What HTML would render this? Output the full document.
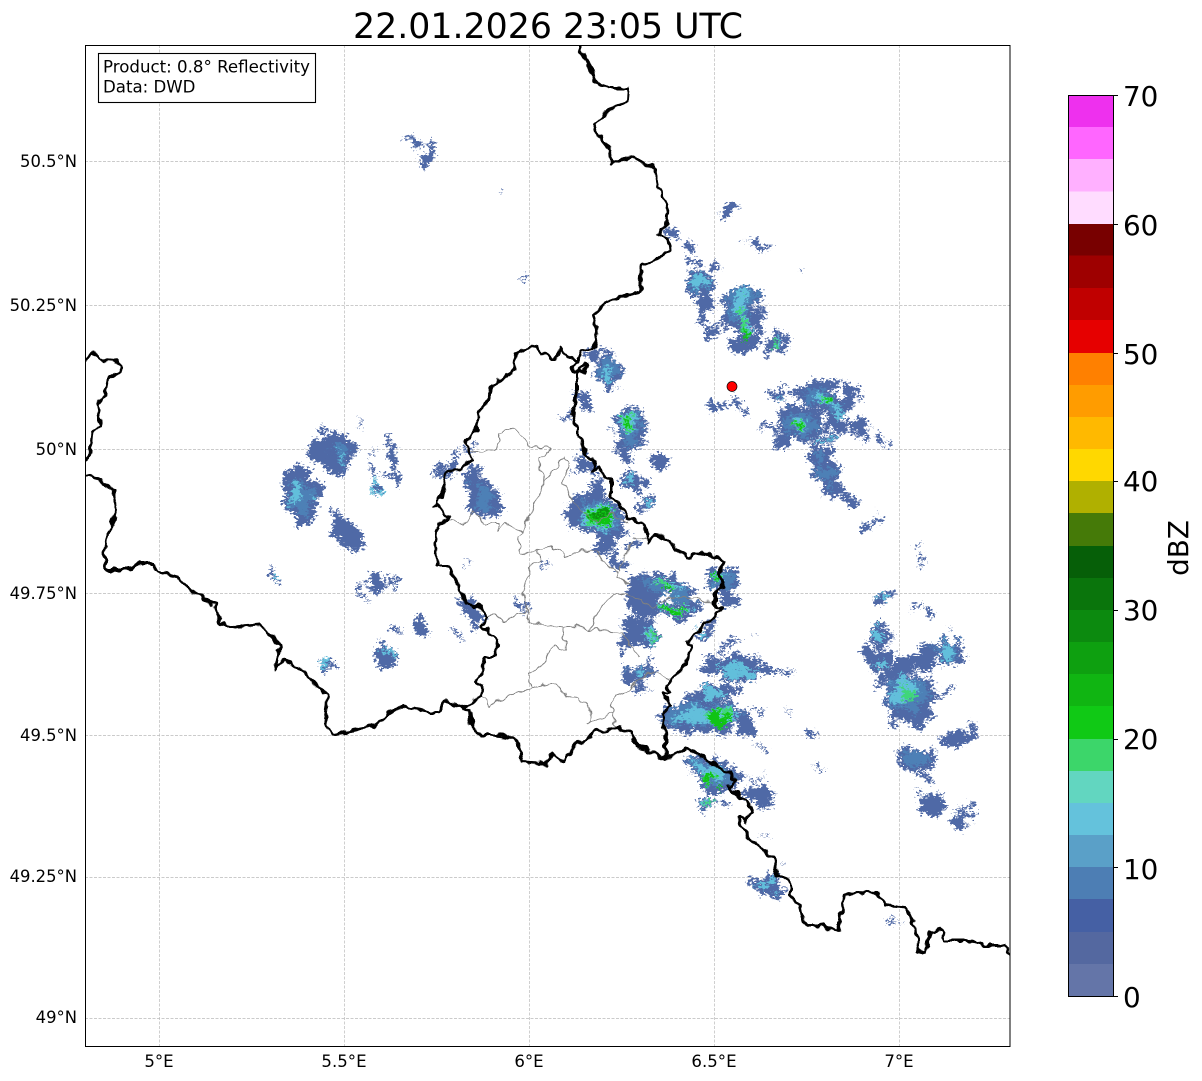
<!DOCTYPE html>
<html><head><meta charset="utf-8"><style>
html,body{margin:0;padding:0;background:#fff}
svg{display:block}
text{font-family:"DejaVu Sans","Liberation Sans",sans-serif;fill:#000}
</style></head><body>
<svg width="1202" height="1081" viewBox="0 0 1202 1081" xmlns="http://www.w3.org/2000/svg">
<defs>
<filter id="r" filterUnits="userSpaceOnUse" x="85" y="45" width="925" height="1002" color-interpolation-filters="sRGB">
<feTurbulence type="fractalNoise" baseFrequency="0.07" numOctaves="2" seed="4" result="a"/>
<feTurbulence type="fractalNoise" baseFrequency="0.3 0.45" numOctaves="2" seed="9" result="b"/>
<feDisplacementMap in="SourceGraphic" in2="a" scale="26" xChannelSelector="R" yChannelSelector="G" result="d"/>
<feDisplacementMap in="d" in2="b" scale="14" xChannelSelector="R" yChannelSelector="G"/>
</filter>
<filter id="w" filterUnits="userSpaceOnUse" x="85" y="45" width="925" height="1002" color-interpolation-filters="sRGB">
<feTurbulence type="fractalNoise" baseFrequency="0.14" numOctaves="1" seed="7" result="a"/>
<feDisplacementMap in="SourceGraphic" in2="a" scale="9" xChannelSelector="R" yChannelSelector="G"/>
</filter>
<clipPath id="ax"><rect x="85.5" y="45.5" width="924.5" height="1001"/></clipPath>
</defs>
<rect width="1202" height="1081" fill="#fff"/>
<text x="353" y="38" font-size="34.700" textLength="390" lengthAdjust="spacingAndGlyphs">22.01.2026 23:05 UTC</text>

<g stroke="#bbb" stroke-width="0.7" stroke-dasharray="3 1.5" fill="none">
<path d="M159.500 45V1047M344.500 45V1047M529.500 45V1047M714.500 45V1047M899.500 45V1047"/>
<path d="M85 161.500H1010M85 305.500H1010M85 449.500H1010M85 593.500H1010M85 735.500H1010M85 877.500H1010M85 1018.500H1010"/>
</g>

<g clip-path="url(#ax)">
<g filter="url(#r)">
<!-- base blue layer -->
<g fill="#4f69a6">
<ellipse cx="415" cy="143" rx="6" ry="2" transform="rotate(-40 415 143)"/>
<ellipse cx="430" cy="155" rx="14" ry="4" transform="rotate(-70 430 155)"/>
<circle cx="504" cy="193" r="2"/>
<ellipse cx="518" cy="277" rx="6" ry="2" transform="rotate(-50 518 277)"/>
<ellipse cx="728" cy="211" rx="9" ry="4" transform="rotate(-40 728 211)"/>
<ellipse cx="758" cy="246" rx="16" ry="4" transform="rotate(25 758 246)"/>
<ellipse cx="673" cy="233" rx="5" ry="6"/>
<ellipse cx="688" cy="248" rx="7" ry="5"/>
<circle cx="693" cy="262" r="4"/>
<ellipse cx="701" cy="282" rx="14" ry="12"/>
<ellipse cx="705" cy="303" rx="8" ry="11"/>
<ellipse cx="703" cy="318" rx="8" ry="8"/>
<ellipse cx="741" cy="310" rx="20" ry="24"/>
<ellipse cx="743" cy="343" rx="13" ry="11"/>
<circle cx="760" cy="328" r="5"/>
<ellipse cx="758" cy="340" rx="5" ry="7"/>
<ellipse cx="777" cy="344" rx="9" ry="10"/>
<circle cx="715" cy="331" r="4"/>
<circle cx="715" cy="268" r="3"/>
<circle cx="801" cy="269" r="1.500"/>
<ellipse cx="718" cy="406" rx="7" ry="5"/>
<ellipse cx="742" cy="408" rx="3" ry="5" transform="rotate(-30 742 408)"/>
<ellipse cx="800" cy="424" rx="23" ry="17"/>
<ellipse cx="782" cy="440" rx="6" ry="11"/>
<ellipse cx="770" cy="426" rx="6" ry="3" transform="rotate(-25 770 426)"/>
<ellipse cx="778" cy="396" rx="7" ry="4" transform="rotate(25 778 396)"/>
<ellipse cx="783" cy="388" rx="3" ry="8" transform="rotate(20 783 388)"/>
<ellipse cx="817" cy="387" rx="24" ry="7" transform="rotate(-20 817 387)"/>
<ellipse cx="823" cy="400" rx="27" ry="13" transform="rotate(25 823 400)"/>
<ellipse cx="837" cy="415" rx="10" ry="10"/>
<ellipse cx="850" cy="393" rx="6" ry="15"/>
<ellipse cx="820" cy="441" rx="13" ry="6" transform="rotate(-25 820 441)"/>
<ellipse cx="837" cy="427" rx="12" ry="6"/>
<ellipse cx="857" cy="425" rx="7" ry="6"/>
<ellipse cx="865" cy="428" rx="6" ry="9"/>
<ellipse cx="879" cy="438" rx="2" ry="8" transform="rotate(-15 879 438)"/>
<ellipse cx="889" cy="446" rx="2" ry="5"/>
<ellipse cx="825" cy="470" rx="12" ry="27" transform="rotate(-25 825 470)"/>
<ellipse cx="848" cy="497" rx="13" ry="6" transform="rotate(35 848 497)"/>
<ellipse cx="873" cy="522" rx="11" ry="3" transform="rotate(-35 873 522)"/>
<ellipse cx="916" cy="549" rx="4" ry="2" transform="rotate(-40 916 549)"/>
<ellipse cx="926" cy="563" rx="7" ry="2.500" transform="rotate(-50 926 563)"/>
<ellipse cx="885" cy="598" rx="10" ry="5" transform="rotate(-50 885 598)"/>
<ellipse cx="917" cy="608" rx="6" ry="3" transform="rotate(-30 917 608)"/>
<ellipse cx="933" cy="611" rx="6" ry="3" transform="rotate(-35 933 611)"/>
<ellipse cx="880" cy="637" rx="12" ry="9"/>
<ellipse cx="878" cy="660" rx="14" ry="12"/>
<ellipse cx="903" cy="666" rx="30" ry="8" transform="rotate(-30 903 666)"/>
<ellipse cx="925" cy="658" rx="24" ry="7" transform="rotate(-25 925 658)"/>
<ellipse cx="947" cy="652" rx="20" ry="11" transform="rotate(10 947 652)"/>
<ellipse cx="927" cy="667" rx="14" ry="4" transform="rotate(-25 927 667)"/>
<ellipse cx="950" cy="627" rx="4" ry="3"/>
<ellipse cx="910" cy="700" rx="26" ry="27" transform="rotate(-20 910 700)"/>
<ellipse cx="943" cy="693" rx="14" ry="3" transform="rotate(-30 943 693)"/>
<ellipse cx="960" cy="737" rx="22" ry="7" transform="rotate(-20 960 737)"/>
<ellipse cx="917" cy="760" rx="21" ry="12" transform="rotate(5 917 760)"/>
<ellipse cx="925" cy="780" rx="11" ry="3" transform="rotate(-15 925 780)"/>
<ellipse cx="932" cy="802" rx="15" ry="11" transform="rotate(-35 932 802)"/>
<ellipse cx="962" cy="809" rx="11" ry="3" transform="rotate(-25 962 809)"/>
<ellipse cx="962" cy="822" rx="16" ry="6" transform="rotate(-25 962 822)"/>
<ellipse cx="592" cy="354" rx="7" ry="8"/>
<ellipse cx="608" cy="371" rx="13" ry="15" transform="rotate(-20 608 371)"/>
<ellipse cx="584" cy="398" rx="7" ry="9"/>
<ellipse cx="568" cy="414" rx="3" ry="6"/>
<ellipse cx="631" cy="428" rx="17" ry="22"/>
<ellipse cx="625" cy="455" rx="7" ry="6"/>
<ellipse cx="657" cy="458" rx="6" ry="9"/>
<ellipse cx="634" cy="483" rx="8" ry="14" transform="rotate(-25 634 483)"/>
<ellipse cx="648" cy="505" rx="8" ry="8"/>
<ellipse cx="597" cy="516" rx="30" ry="20" transform="rotate(25 597 516)"/>
<ellipse cx="574" cy="518" rx="10" ry="10"/>
<ellipse cx="607" cy="543" rx="10" ry="10" transform="rotate(45 607 543)"/>
<ellipse cx="618" cy="562" rx="9" ry="4" transform="rotate(45 618 562)"/>
<ellipse cx="633" cy="547" rx="6" ry="4" transform="rotate(-45 633 547)"/>
<ellipse cx="597" cy="490" rx="8" ry="8"/>
<ellipse cx="585" cy="463" rx="15" ry="6" transform="rotate(45 585 463)"/>
<circle cx="573" cy="472" r="3"/>
<ellipse cx="482" cy="495" rx="16" ry="28" transform="rotate(-25 482 495)"/>
<ellipse cx="450" cy="463" rx="6" ry="17" transform="rotate(25 450 463)"/>
<circle cx="472" cy="448" r="5"/>
<circle cx="468" cy="563" r="2"/>
<ellipse cx="469" cy="610" rx="9" ry="19" transform="rotate(-30 469 610)"/>
<ellipse cx="523" cy="602" rx="3.500" ry="12" transform="rotate(-40 523 602)"/>
<ellipse cx="545" cy="563" rx="5" ry="2" transform="rotate(35 545 563)"/>
<ellipse cx="458" cy="636" rx="2" ry="6" transform="rotate(-30 458 636)"/>
<ellipse cx="670" cy="587" rx="30" ry="11" transform="rotate(25 670 587)"/>
<ellipse cx="643" cy="600" rx="16" ry="20"/>
<ellipse cx="674" cy="610" rx="26" ry="9"/>
<ellipse cx="720" cy="578" rx="17" ry="13"/>
<ellipse cx="728" cy="597" rx="13" ry="9"/>
<ellipse cx="635" cy="634" rx="14" ry="18"/>
<ellipse cx="653" cy="637" rx="8" ry="6"/>
<ellipse cx="627" cy="648" rx="10" ry="3" transform="rotate(20 627 648)"/>
<ellipse cx="640" cy="674" rx="17" ry="12" transform="rotate(-30 640 674)"/>
<ellipse cx="703" cy="632" rx="18" ry="5" transform="rotate(-40 703 632)"/>
<ellipse cx="728" cy="645" rx="14" ry="3" transform="rotate(-10 728 645)"/>
<ellipse cx="735" cy="660" rx="30" ry="4"/>
<ellipse cx="740" cy="670" rx="42" ry="7"/>
<ellipse cx="770" cy="673" rx="22" ry="3"/>
<ellipse cx="713" cy="693" rx="30" ry="8" transform="rotate(-10 713 693)"/>
<ellipse cx="703" cy="717" rx="47" ry="17" transform="rotate(-3 703 717)"/>
<ellipse cx="745" cy="727" rx="9" ry="5"/>
<ellipse cx="712" cy="773" rx="27" ry="16" transform="rotate(25 712 773)"/>
<ellipse cx="760" cy="796" rx="14" ry="7"/>
<ellipse cx="710" cy="802" rx="13" ry="5"/>
<ellipse cx="757" cy="778" rx="10" ry="2"/>
<ellipse cx="762" cy="746" rx="6" ry="2"/>
<ellipse cx="757" cy="710" rx="8" ry="1.500"/>
<ellipse cx="767" cy="840" rx="4" ry="1"/>
<ellipse cx="752" cy="631" rx="4" ry="1.500"/>
<ellipse cx="766" cy="887" rx="16" ry="8"/>
<ellipse cx="893" cy="921" rx="8" ry="2" transform="rotate(-10 893 921)"/>
<ellipse cx="811" cy="734" rx="5" ry="4"/>
<ellipse cx="818" cy="766" rx="6" ry="1.500"/>
<ellipse cx="793" cy="708" rx="5" ry="1.500"/>
<ellipse cx="785" cy="868" rx="3" ry="1"/>
<ellipse cx="332" cy="450" rx="24" ry="19"/>
<ellipse cx="338" cy="464" rx="11" ry="15"/>
<ellipse cx="301" cy="495" rx="20" ry="30" transform="rotate(-15 301 495)"/>
<ellipse cx="345" cy="531" rx="13" ry="13"/>
<ellipse cx="355" cy="543" rx="5" ry="12" transform="rotate(-20 355 543)"/>
<ellipse cx="336" cy="515" rx="3" ry="12" transform="rotate(-25 336 515)"/>
<ellipse cx="375" cy="473" rx="4" ry="18" transform="rotate(-15 375 473)"/>
<ellipse cx="392" cy="463" rx="4" ry="28" transform="rotate(-8 392 463)"/>
<ellipse cx="357" cy="425" rx="1.500" ry="3"/>
<ellipse cx="364" cy="424" rx="1.500" ry="3"/>
<ellipse cx="275" cy="577" rx="3" ry="12" transform="rotate(-20 275 577)"/>
<ellipse cx="328" cy="663" rx="3" ry="9" transform="rotate(-35 328 663)"/>
<ellipse cx="378" cy="583" rx="7" ry="10" transform="rotate(-20 378 583)"/>
<ellipse cx="362" cy="592" rx="2.500" ry="11" transform="rotate(-25 362 592)"/>
<ellipse cx="393" cy="585" rx="2" ry="8" transform="rotate(-25 393 585)"/>
<ellipse cx="385" cy="655" rx="8" ry="14" transform="rotate(-35 385 655)"/>
<ellipse cx="397" cy="632" rx="3" ry="7" transform="rotate(-35 397 632)"/>
<ellipse cx="421" cy="630" rx="6" ry="10" transform="rotate(-25 421 630)"/>
<circle cx="438" cy="470" r="3"/>
</g>
<!-- mid blue -->
<g fill="#4d80b6">
<ellipse cx="741" cy="305" rx="15" ry="18"/>
<ellipse cx="700" cy="282" rx="8" ry="7"/>
<ellipse cx="800" cy="424" rx="17" ry="11"/>
<ellipse cx="823" cy="400" rx="20" ry="8" transform="rotate(25 823 400)"/>
<ellipse cx="825" cy="470" rx="5" ry="18" transform="rotate(-25 825 470)"/>
<ellipse cx="597" cy="516" rx="23" ry="15" transform="rotate(25 597 516)"/>
<ellipse cx="631" cy="428" rx="13" ry="17"/>
<ellipse cx="608" cy="370" rx="9" ry="11"/>
<ellipse cx="482" cy="495" rx="7" ry="19" transform="rotate(-25 482 495)"/>
<ellipse cx="670" cy="590" rx="26" ry="8" transform="rotate(25 670 590)"/>
<ellipse cx="720" cy="580" rx="12" ry="10"/>
<ellipse cx="703" cy="715" rx="40" ry="11"/>
<ellipse cx="712" cy="773" rx="22" ry="12" transform="rotate(25 712 773)"/>
<ellipse cx="908" cy="695" rx="19" ry="19" transform="rotate(-20 908 695)"/>
<ellipse cx="947" cy="650" rx="14" ry="7"/>
<ellipse cx="640" cy="672" rx="11" ry="8"/>
<ellipse cx="300" cy="495" rx="11" ry="20"/>
<ellipse cx="340" cy="456" rx="7" ry="11"/>
<ellipse cx="917" cy="757" rx="13" ry="6"/>
</g>
<!-- cyan -->
<g fill="#62bfdb">
<ellipse cx="741" cy="303" rx="11" ry="11"/>
<ellipse cx="745" cy="328" rx="5" ry="10"/>
<ellipse cx="700" cy="281" rx="5" ry="4"/>
<ellipse cx="777" cy="344" rx="4" ry="5"/>
<ellipse cx="607" cy="375" rx="5" ry="6"/>
<ellipse cx="628" cy="425" rx="10" ry="12"/>
<ellipse cx="634" cy="480" rx="4" ry="6"/>
<ellipse cx="648" cy="505" rx="4" ry="4"/>
<ellipse cx="596" cy="517" rx="18" ry="11" transform="rotate(25 596 517)"/>
<ellipse cx="800" cy="424" rx="11" ry="7"/>
<ellipse cx="826" cy="401" rx="14" ry="5" transform="rotate(25 826 401)"/>
<ellipse cx="822" cy="440" rx="7" ry="3" transform="rotate(-25 822 440)"/>
<ellipse cx="780" cy="397" rx="4" ry="2" transform="rotate(25 780 397)"/>
<ellipse cx="840" cy="415" rx="6" ry="5"/>
<ellipse cx="670" cy="587" rx="15" ry="5" transform="rotate(25 670 587)"/>
<ellipse cx="674" cy="610" rx="12" ry="5"/>
<ellipse cx="718" cy="578" rx="8" ry="8"/>
<ellipse cx="700" cy="632" rx="7" ry="3" transform="rotate(-40 700 632)"/>
<ellipse cx="650" cy="637" rx="6" ry="5"/>
<ellipse cx="640" cy="675" rx="8" ry="6"/>
<ellipse cx="740" cy="670" rx="22" ry="3"/>
<ellipse cx="712" cy="693" rx="13" ry="4"/>
<ellipse cx="710" cy="716" rx="32" ry="8"/>
<ellipse cx="712" cy="773" rx="16" ry="8" transform="rotate(25 712 773)"/>
<ellipse cx="709" cy="802" rx="9" ry="3"/>
<ellipse cx="764" cy="887" rx="7" ry="4"/>
<ellipse cx="905" cy="690" rx="13" ry="12"/>
<ellipse cx="947" cy="650" rx="8" ry="5"/>
<ellipse cx="878" cy="635" rx="6" ry="3"/>
<ellipse cx="878" cy="662" rx="7" ry="5"/>
<ellipse cx="885" cy="597" rx="4" ry="3"/>
<ellipse cx="296" cy="493" rx="5" ry="13"/>
<ellipse cx="313" cy="498" rx="4" ry="4"/>
<ellipse cx="340" cy="458" rx="4" ry="7"/>
<ellipse cx="378" cy="486" rx="3" ry="3"/>
<ellipse cx="277" cy="580" rx="2" ry="4" transform="rotate(-20 277 580)"/>
<ellipse cx="326" cy="660" rx="2.500" ry="4" transform="rotate(-35 326 660)"/>
<ellipse cx="386" cy="651" rx="3" ry="7" transform="rotate(-35 386 651)"/>
</g>
<!-- light green -->
<g fill="#3fd67a">
<ellipse cx="741" cy="307" rx="6" ry="5"/>
<ellipse cx="744" cy="330" rx="3" ry="9"/>
<ellipse cx="628" cy="425" rx="6" ry="8"/>
<ellipse cx="597" cy="517" rx="14" ry="8" transform="rotate(25 597 517)"/>
<ellipse cx="798" cy="425" rx="9" ry="5"/>
<ellipse cx="826" cy="400" rx="8" ry="3" transform="rotate(25 826 400)"/>
<ellipse cx="667" cy="587" rx="11" ry="5" transform="rotate(25 667 587)"/>
<ellipse cx="674" cy="610" rx="9" ry="4"/>
<ellipse cx="716" cy="578" rx="5" ry="7"/>
<ellipse cx="652" cy="637" rx="4" ry="3"/>
<ellipse cx="717" cy="716" rx="15" ry="7"/>
<ellipse cx="710" cy="777" rx="10" ry="4"/>
<ellipse cx="708" cy="802" rx="6" ry="2"/>
<ellipse cx="908" cy="695" rx="8" ry="8"/>
<ellipse cx="774" cy="345" rx="2" ry="3"/>
</g>
<!-- green -->
<g fill="#10c415">
<ellipse cx="744" cy="335" rx="4" ry="6"/>
<ellipse cx="628" cy="424" rx="4" ry="5"/>
<ellipse cx="600" cy="517" rx="11" ry="6" transform="rotate(20 600 517)"/>
<ellipse cx="797" cy="426" rx="6" ry="3"/>
<ellipse cx="828" cy="400" rx="4" ry="2"/>
<ellipse cx="666" cy="589" rx="8" ry="4" transform="rotate(25 666 589)"/>
<ellipse cx="673" cy="610" rx="7" ry="3"/>
<ellipse cx="715" cy="578" rx="3" ry="6"/>
<ellipse cx="718" cy="717" rx="12" ry="7"/>
<ellipse cx="708" cy="777" rx="6" ry="3"/>
<ellipse cx="723" cy="787" rx="3" ry="3"/>
</g>
<g fill="#0c9010">
<ellipse cx="600" cy="516" rx="5" ry="3"/>
<ellipse cx="666" cy="590" rx="4" ry="2"/>
</g>
</g>

<!-- gray admin lines -->
<g fill="none" stroke="#808080" stroke-width="1.100" stroke-linejoin="round" filter="url(#w)">
<path d="M470 453 485 452 495 450 500 440 498 433 507 430 515 428 525 442 538 448 550 448 550 453 540 458 540 468 545 480 535 503 527 522 523 533 518 537 520 553 537 550 552 547 558 550 565 557 583 550 598 552 602 562 613 568 618 570 618 577 630 585"/>
<path d="M450 520 463 524 473 512 485 523 498 523 498 530 505 523 523 533"/>
<path d="M545 480 565 457 568 462 563 483 573 502 585 513 597 523 613 513 627 522"/>
<path d="M633 538 647 540M632 540 627 553 620 570"/>
<path d="M538 550 540 560 533 563 527 577 527 585 522 593 528 610 529 623 545 625 563 627 575 626 590 630 603 629 623 632 633 650 640 658"/>
<path d="M527 610 505 622 493 614 488 617"/>
<path d="M563 627 562 633 565 640 565 651 555 646 548 653 542 667 529 673 532 688 547 684 557 683 558 688 568 697 578 698 590 708 592 715 588 723 612 713 617 728"/>
<path d="M612 713 612 702 615 695 627 692 637 683 650 672 657 673 670 678"/>
<path d="M532 688 518 693 507 697 493 703 488 707 487 697 482 695"/>
<path d="M590 630 597 612 600 610 613 595 627 595 640 600 653 607 673 597 693 597 713 602"/>
</g>

<!-- black borders -->
<g fill="none" stroke="#000" stroke-width="3" stroke-linejoin="round" stroke-linecap="round" filter="url(#w)">
<path d="M578 45 586 60 592 70 596 84 604 86 610 88 629 88 628 100 612 108 594 124 598 135 610 150 612 162 633 157 642 162 655 168 658 187 667 205 666 225 658 235 668 240 670 250 652 262 642 264 640 292 620 297 605 303 594 315 598 332 594 348 582 352 577 362 572 370 585 372 587 362 577 373 577 390 572 413 578 427 578 438 585 447 585 455 595 460 593 472 600 468 603 477 612 480 612 497 630 520 640 522 647 530 648 543 655 535 665 537 677 550 688 557 703 552 713 558 725 560 720 573 722 588 715 590 715 607 722 608 713 618 697 632 687 642 692 645 687 663 673 678 667 685 670 692 662 693 670 705 662 715 665 730 666 757"/>
<path d="M582 352 577 362 560 350 555 358 540 353 538 345 517 352 512 372 493 385 488 400 478 412 477 428 465 443 472 460 462 467 447 472 442 497 435 505 450 518 438 525 435 543 438 567 450 567 467 605 478 605 488 617 482 627 497 640 495 657 485 657 482 673 475 682 483 687 482 695 462 708"/>
<path d="M462 708 470 712 472 725 480 735 498 735 510 737 518 742 522 762 540 763 545 765 552 755 565 762 577 742 587 740 593 732 618 728 630 733 638 747 652 752 665 758 678 753 687 748 703 757 727 772 735 780 728 787 745 800 752 812 747 820 738 817 740 823 748 837 773 858 778 875 790 880 790 895 800 905 805 925 820 925 838 932 845 895 855 892 878 893 885 905 905 908 915 925 918 950 925 953 930 932 942 930 945 940 965 940 985 945 1005 945 1011 953"/>
<path d="M462 708 445 700 438 712 430 712 402 706 392 712 375 725 345 732 331 736 325 720 328 695 318 688 305 672 285 660 275 668 280 645 260 625 235 627 220 624 215 605 190 590 180 578 158 572 153 563 140 563 125 570 106 570 104 545 112 525 117 510 113 490 98 478 85 474"/>
<path d="M85 362 92 352 100 360 118 362 122 370 108 380 105 395 97 405 100 425 92 435 90 455 85 460"/>
</g>
<circle cx="732" cy="386.500" r="5" fill="#f00" stroke="#000" stroke-width="0.700"/>
</g>

<rect x="85.500" y="45.500" width="924.500" height="1001" fill="none" stroke="#000" stroke-width="1"/>

<rect x="98.500" y="53.500" width="217" height="49" fill="#fff" stroke="#000" stroke-width="1.100"/>
<text x="103" y="72.500" font-size="16.600" textLength="207" lengthAdjust="spacingAndGlyphs">Product: 0.8° Reflectivity</text>
<text x="103" y="92.500" font-size="16.600">Data: DWD</text>

<g font-size="16.400" text-anchor="end">
<text x="77" y="167">50.5°N</text>
<text x="77" y="311">50.25°N</text>
<text x="77" y="455">50°N</text>
<text x="77" y="599">49.75°N</text>
<text x="77" y="741">49.5°N</text>
<text x="77" y="882">49.25°N</text>
<text x="77" y="1023">49°N</text>
</g>
<g font-size="16.600" text-anchor="middle">
<text x="159" y="1067">5°E</text>
<text x="344" y="1067">5.5°E</text>
<text x="529" y="1067">6°E</text>
<text x="714" y="1067">6.5°E</text>
<text x="899" y="1067">7°E</text>
</g>

<!-- colorbar -->
<g shape-rendering="crispEdges">
<rect x="1068" y="95.500" width="45" height="32.500" fill="#ee30ee"/>
<rect x="1068" y="127" width="45" height="33" fill="#ff66ff"/>
<rect x="1068" y="159" width="45" height="33" fill="#ffb0ff"/>
<rect x="1068" y="191.500" width="45" height="33" fill="#ffdcff"/>
<rect x="1068" y="224" width="45" height="32" fill="#780000"/>
<rect x="1068" y="255.500" width="45" height="33" fill="#9e0000"/>
<rect x="1068" y="288" width="45" height="32" fill="#c00000"/>
<rect x="1068" y="320" width="45" height="33" fill="#e60000"/>
<rect x="1068" y="353" width="45" height="32" fill="#ff8000"/>
<rect x="1068" y="385" width="45" height="32" fill="#ff9c00"/>
<rect x="1068" y="417" width="45" height="32" fill="#ffb900"/>
<rect x="1068" y="449" width="45" height="32" fill="#ffd800"/>
<rect x="1068" y="481" width="45" height="33" fill="#b0b000"/>
<rect x="1068" y="513" width="45" height="33" fill="#457a08"/>
<rect x="1068" y="546" width="45" height="32" fill="#065f08"/>
<rect x="1068" y="578" width="45" height="32" fill="#0a750c"/>
<rect x="1068" y="610" width="45" height="32" fill="#0c8a0f"/>
<rect x="1068" y="642" width="45" height="32" fill="#0ea010"/>
<rect x="1068" y="674" width="45" height="32" fill="#10b512"/>
<rect x="1068" y="706" width="45" height="33" fill="#10c915"/>
<rect x="1068" y="739" width="45" height="32" fill="#3cd66a"/>
<rect x="1068" y="771" width="45" height="32" fill="#62d6c0"/>
<rect x="1068" y="803" width="45" height="32" fill="#64c2dc"/>
<rect x="1068" y="835" width="45" height="32" fill="#5aa0c8"/>
<rect x="1068" y="867" width="45" height="32" fill="#4d7eb4"/>
<rect x="1068" y="899" width="45" height="33" fill="#4560a4"/>
<rect x="1068" y="932" width="45" height="32" fill="#5468a0"/>
<rect x="1068" y="964" width="45" height="32.500" fill="#6475a8"/>
</g>
<rect x="1068.500" y="95.500" width="45" height="901" fill="none" stroke="#000" stroke-width="1"/>
<path d="M1113 95.500h5M1113 224.500h5M1113 353.500h5M1113 481.500h5M1113 610.500h5M1113 739.500h5M1113 867.500h5M1113 996.500h5" stroke="#000" stroke-width="1"/>
<g font-size="27.800">
<text x="1123" y="106">70</text>
<text x="1123" y="235">60</text>
<text x="1123" y="364">50</text>
<text x="1123" y="491">40</text>
<text x="1123" y="620">30</text>
<text x="1123" y="749">20</text>
<text x="1123" y="879">10</text>
<text x="1123" y="1007">0</text>
</g>
<text transform="translate(1188 548) rotate(-90)" font-size="27.800" text-anchor="middle">dBZ</text>
</svg>
</body></html>
